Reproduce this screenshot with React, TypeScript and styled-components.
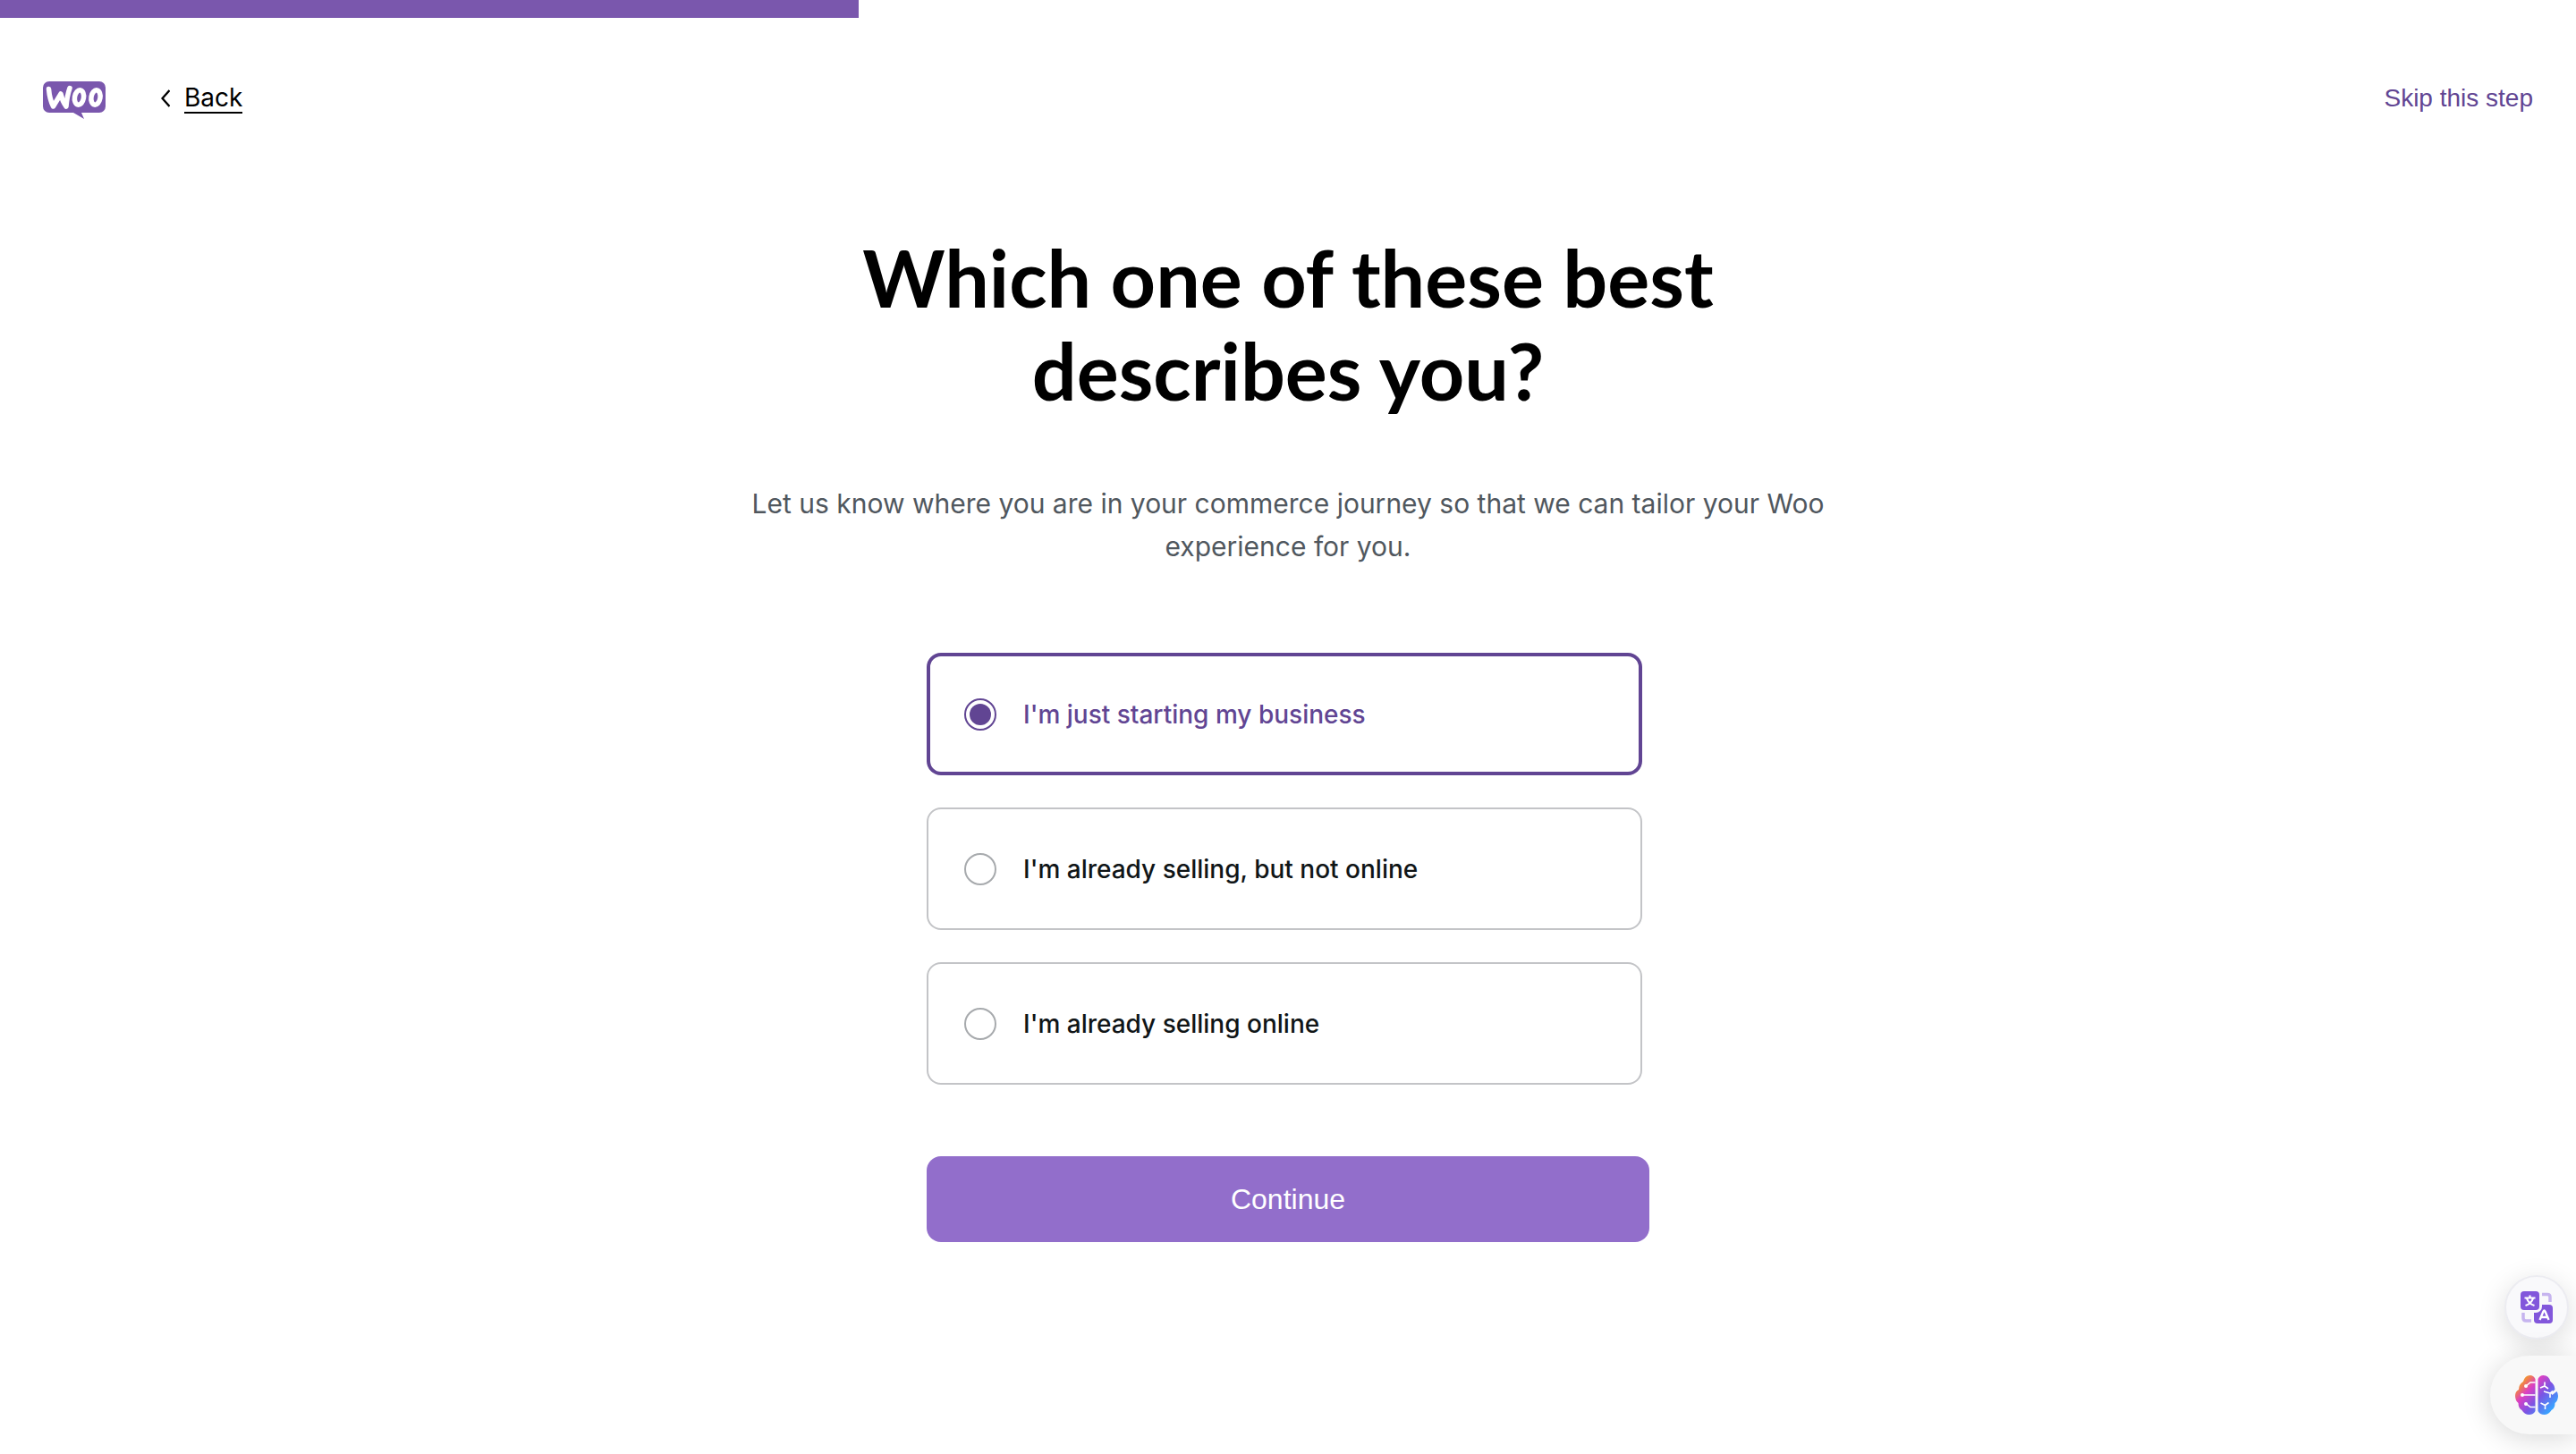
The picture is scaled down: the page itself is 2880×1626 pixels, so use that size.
import React, { useState } from "react";
import styled, { createGlobalStyle } from "styled-components";

const sans = `Inter, "Liberation Sans", sans-serif`;
const arial = `"Liberation Sans", Arial, sans-serif`;

const GlobalStyle = createGlobalStyle`
  *, *::before, *::after { box-sizing: border-box; }
  body { margin: 0; background: #fff; color: #000; font-family: ${sans}; font-size: 28px; line-height: 32px; }
`;

const Progress = styled.div`
  height: 20px;
`;

const ProgressFill = styled.div`
  height: 100%;
  background: #7a57ad;
`;

const Header = styled.header`
  display: flex;
  align-items: center;
  padding: 68px 48px 0;
  height: 112px;
`;

const Logo = styled.svg`
  width: 70px;
  height: 46px;
  flex: none;
`;

const BackLink = styled.a`
  display: flex;
  align-items: center;
  gap: 16px;
  margin-left: 62px;
  color: #000;
  text-decoration: none;
`;

const BackText = styled.span`
  border-bottom: 2px solid #000;
`;

const Chevron = styled.svg`
  width: 10px;
  height: 20px;
`;

const SkipLink = styled.a`
  margin-left: auto;
  color: #614593;
  font-family: ${arial};
  text-decoration: none;
`;

const Main = styled.main`
  display: flex;
  flex-direction: column;
  align-items: center;
  padding: 126px 48px 0;
`;

const Title = styled.h1`
  margin: 0;
  max-width: 1100px;
  font-family: Lato, ${sans};
  font-size: 88px;
  font-weight: 700;
  line-height: 104px;
  text-align: center;
`;

const Subtitle = styled.p`
  margin: 73px 0 0;
  max-width: 1260px;
  color: #50575e;
  font-size: 30px;
  line-height: 48px;
  text-align: center;
`;

const Form = styled.form`
  width: 100%;
  max-width: 808px;
  margin-top: 95px;
`;

const Options = styled.fieldset`
  display: flex;
  flex-direction: column;
  gap: 36px;
  margin: 0 8px 80px 0;
  padding: 0;
  border: 0;
`;

const Option = styled.label<{ $active: boolean }>`
  display: flex;
  align-items: center;
  gap: 30px;
  height: 137px;
  padding-left: 42px;
  border-radius: 16px;
  box-shadow: inset 0 0 0 ${(p) => (p.$active ? "4px #614593" : "2px #c3c4c7")};
  color: ${(p) => (p.$active ? "#614593" : "#101517")};
  font-weight: 500;
  cursor: pointer;
`;

const Radio = styled.input`
  appearance: none;
  width: 36px;
  height: 36px;
  margin: 0;
  padding: 4px;
  border: 2px solid #a7aaad;
  border-radius: 50%;
  background: #fff;

  &:checked {
    border-color: #614593;
    background: #614593 content-box;
  }
`;

const ContinueButton = styled.button`
  display: block;
  width: 100%;
  height: 96px;
  border: 0;
  border-radius: 16px;
  background: #926ecb;
  color: #fff;
  font-family: ${arial};
  font-size: 32px;
  cursor: pointer;
`;

const Widgets = styled.aside`
  position: fixed;
  right: 0;
  bottom: 22px;
  display: flex;
  flex-direction: column;
  align-items: flex-end;
  gap: 18px;
`;

const TranslateButton = styled.button`
  display: grid;
  place-items: center;
  width: 72px;
  height: 72px;
  margin-right: 8px;
  padding: 0;
  border: 2px solid #ececf1;
  border-radius: 50%;
  background: #f9f9fb;
  box-shadow: 0 8px 32px rgba(0, 0, 0, 0.14);
`;

const BrainButton = styled.button`
  display: flex;
  align-items: center;
  width: 96px;
  height: 88px;
  padding: 0 0 0 28px;
  border: 0;
  border-radius: 44px 0 0 44px;
  background: #f8f8f8;
  box-shadow: 0 4px 32px rgba(0, 0, 0, 0.16);
`;

const choices = [
  "I'm just starting my business",
  "I'm already selling, but not online",
  "I'm already selling online",
];

function WooLogo() {
  return (
    <Logo viewBox="0 -4 70 46" role="img" aria-label="Woo">
      <path fill="#7a57ad" d="M7 0h56a7 7 0 0 1 7 7v21a7 7 0 0 1-7 7H43l3 7-12-7H7a7 7 0 0 1-7-7V7a7 7 0 0 1 7-7Z" />
      <g fill="none" stroke="#fff" strokeWidth="5.5" strokeLinecap="round" strokeLinejoin="round">
        <path d="M6.500 8.500Q7.500 20 11.500 28L20 14Q21.500 22 26 28 27 16 30 7.500" />
        <ellipse cx="40.500" cy="18" rx="5" ry="8.200" transform="rotate(10 40.500 18)" />
        <ellipse cx="59" cy="18" rx="5" ry="8.200" transform="rotate(10 59 18)" />
      </g>
    </Logo>
  );
}

function TranslateIcon() {
  return (
    <svg width="38" height="38" viewBox="0 0 38 38" fill="none" aria-hidden="true">
      <path d="M25 4.500h6q3 0 3 3V13M4 25v6q0 3 3 3h6" stroke="#c6b4ef" strokeWidth="3.500" />
      <rect x="16" y="16" width="21" height="21" rx="4" fill="#8257db" />
      <rect x="-1" y="-1" width="26" height="26" rx="7" fill="#f9f9fb" />
      <rect x="1" y="1" width="21" height="21" rx="4" fill="#8257db" />
      <path d="M5.500 8.500h12M11.500 5.500v3M15 9q-2 6-8.500 8M8 9q2 6 8.500 8" stroke="#fff" strokeWidth="2.200" />
      <path d="M22.500 33l4-9.500q1-2 2 0l4 9.500M24.500 30h6.500" stroke="#fff" strokeWidth="2.400" />
    </svg>
  );
}

function BrainIcon() {
  return (
    <svg width="48" height="44" viewBox="0 0 48 44" fill="none" aria-hidden="true">
      <defs>
        <linearGradient id="brain" x1="8" y1="5" x2="42" y2="36" gradientUnits="userSpaceOnUse">
          <stop offset="0" stopColor="#f39a2b" />
          <stop offset=".1" stopColor="#ee7a55" />
          <stop offset=".28" stopColor="#dc40c4" />
          <stop offset=".6" stopColor="#7a55e4" />
          <stop offset="1" stopColor="#3aa2ff" />
        </linearGradient>
      </defs>
      <path
        fill="url(#brain)"
        d="M22.500 4v36q-2 4-7 4t-8-5q-4-2-4-8-3.500-3-3.500-8t4-7q0-6 5-9 2-7 7.500-7 4 0 6 4ZM25.500 4v36q2 4 7 4t8-5q4-2 4-8 3.500-3 3.500-8 0-3-1.500-5l-5 4-2-2 5-4q-.5-6-5-9-2-7-8-7-4 0-6 4Z"
      />
      <g stroke="#fff" strokeWidth="1.600">
        <path d="M22.500 8H17l-5 4M22.500 22H8M22.500 35.500H17l-5-4M28 14l5-2 4 3M33 12V7.500M32 18l7 2 3-2.500M39 20v5M28.500 31l5 2.500 4-3M33.500 33v5" />
      </g>
      <g fill="#fff">
        <circle cx="12" cy="12" r="2" />
        <circle cx="8" cy="22" r="2" />
        <circle cx="12" cy="32" r="2" />
      </g>
    </svg>
  );
}

export default function App() {
  const [selected, setSelected] = useState(0);
  const step = 1;
  const steps = 3;

  return (
    <>
      <GlobalStyle />
      <Progress>
        <ProgressFill style={{ width: `${(step / steps) * 100}%` }} />
      </Progress>
      <Header>
        <WooLogo />
        <BackLink href="#back">
          <Chevron viewBox="0 0 10 20" fill="none" aria-hidden="true">
            <path d="M9.500 1 1.500 10l8 9" stroke="#000" strokeWidth="2.400" />
          </Chevron>
          <BackText>Back</BackText>
        </BackLink>
        <SkipLink href="#skip">Skip this step</SkipLink>
      </Header>
      <Main>
        <Title>Which one of these best describes you?</Title>
        <Subtitle>
          Let us know where you are in your commerce journey so that we can tailor your Woo experience for you.
        </Subtitle>
        <Form onSubmit={(e) => e.preventDefault()}>
          <Options aria-label="Business stage">
            {choices.map((choice, i) => (
              <Option key={choice} $active={selected === i}>
                <Radio type="radio" name="stage" checked={selected === i} onChange={() => setSelected(i)} />
                {choice}
              </Option>
            ))}
          </Options>
          <ContinueButton type="submit">Continue</ContinueButton>
        </Form>
      </Main>
      <Widgets>
        <TranslateButton type="button" aria-label="Translate">
          <TranslateIcon />
        </TranslateButton>
        <BrainButton type="button" aria-label="Assistant">
          <BrainIcon />
        </BrainButton>
      </Widgets>
    </>
  );
}
